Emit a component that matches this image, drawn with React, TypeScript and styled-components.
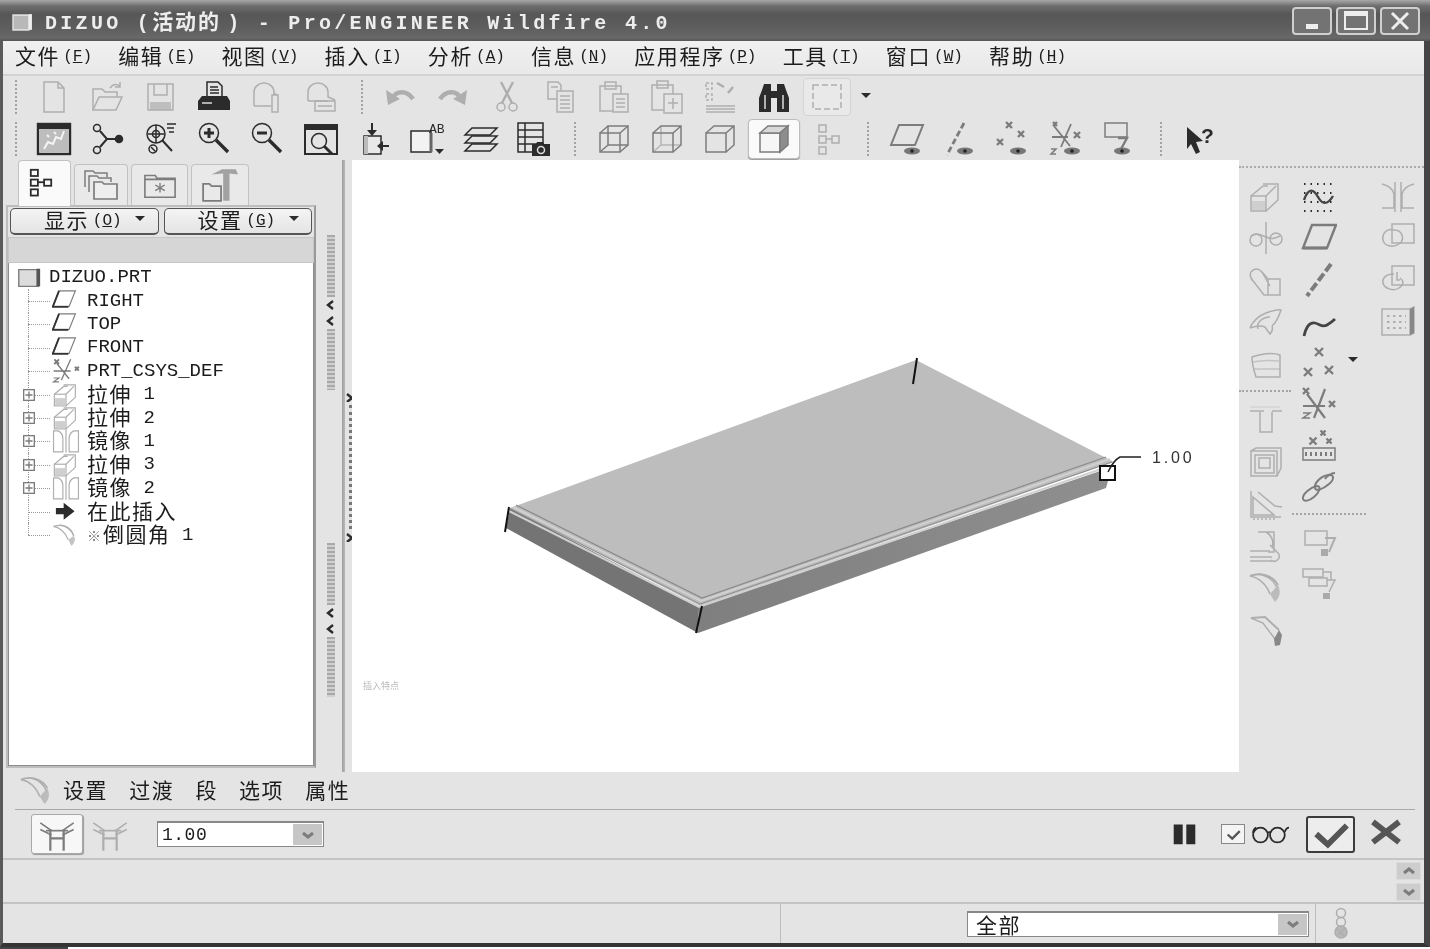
import React from "react";
import styled, { createGlobalStyle } from "styled-components";

const mono = `"Liberation Mono", "Noto Sans CJK SC", monospace`;
const cjk = `"Noto Sans CJK SC", "Liberation Sans", sans-serif`;
const faceBg = "#e4e4e4";

const Global = createGlobalStyle`
  html, body { margin: 0; padding: 0; background: #fff; }
  * { box-sizing: border-box; }
`;

type Tone = "dim" | "mid" | "dark";
const toneColor: Record<Tone, string> = { dim: "#aeaeae", mid: "#7c7c7c", dark: "#2b2b2b" };

const Glyph = styled.svg<{ $tone: Tone }>`
  display: block;
  flex: none;
  fill: none;
  stroke: ${(p) => toneColor[p.$tone]};
  color: ${(p) => toneColor[p.$tone]};
  stroke-width: 1.5;
`;

const Fill = (p: React.SVGProps<SVGPathElement>) => <path fill="currentColor" stroke="none" {...p} />;
const eye = (
  <>
    <ellipse cx="23" cy="30" rx="8" ry="3.4" fill="#777" stroke="none" />
    <circle cx="23" cy="30" r="1.8" fill="#222" stroke="none" />
  </>
);
const eyeLeft = (
  <>
    <ellipse cx="20" cy="30" rx="8" ry="3.4" fill="#777" stroke="none" />
    <circle cx="20" cy="30" r="1.8" fill="#222" stroke="none" />
  </>
);
const xMark = (x: number, y: number, r = 3) => (
  <path strokeWidth="2.4" d={`M${x - r} ${y - r}l${r * 2} ${r * 2}M${x + r} ${y - r}l${-r * 2} ${r * 2}`} />
);

const icons: Record<string, React.ReactNode> = {
  new: (<><path d="M8 3h14l6 6v24H8z" /><path d="M22 3v6h6" /></>),
  open: (<><path d="M4 31V10h9l3 3h12v5" /><path d="M4 31l6-13h23l-6 13z" /><path d="M21 9c3-4 7-4 10-2M31 3v5h-5" /></>),
  save: (<><rect x="6" y="5" width="25" height="26" /><path d="M12 5v11h13V5" /><Fill d="M8 23h21v8H8z" opacity=".7" /></>),
  print: (<><path d="M11 3h11l4 4v11H11z" /><path d="M14 8h8M14 11h9M14 14h9" /><Fill d="M6 17h25l3 5v9H2v-9z" /><path stroke="#ddd" d="M6 24h10" /></>),
  mail: (<><path d="M5 27V13a10 9 0 0 1 20 0v3" /><path d="M5 27h17" /><rect x="23" y="16" width="6" height="17" /><path d="M25 14l3 2" /></>),
  mail2: (<><path d="M5 22V13a10 9 0 0 1 20 0v5l7 3" /><path d="M5 22h20" /><rect x="12" y="22" width="20" height="10" /><path d="M15 27h14" /></>),
  undo: (<><path strokeWidth="4.5" d="M10 20c4-9 15-9 21 0" /><Fill d="M4 11l2 15 12-6z" /></>),
  redo: (<><path strokeWidth="4.5" d="M26 20c-4-9-15-9-21 0" /><Fill d="M32 11l-2 15-12-6z" /></>),
  cut: (<><circle cx="12" cy="28" r="4" /><circle cx="24" cy="28" r="4" /><path strokeWidth="2.4" d="M13 24L24 3M23 24L12 3" /></>),
  copy: (<><path d="M6 3h10l3 3v14H6z" /><rect x="15" y="12" width="16" height="21" fill="#e4e4e4" /><path d="M9 8h7M18 17h10M18 21h10M18 25h10M18 29h10" /></>),
  paste: (<><rect x="4" y="7" width="21" height="25" /><rect x="9" y="3" width="11" height="7" /><rect x="17" y="15" width="15" height="18" fill="#e4e4e4" /><path d="M20 20h9M20 24h9M20 28h9" /></>),
  pasteSp: (<><rect x="3" y="6" width="21" height="25" /><rect x="8" y="2" width="11" height="7" /><rect x="15" y="15" width="18" height="19" fill="#e4e4e4" /><path d="M24 19v11M19 24h10" /></>),
  regen: (<><path strokeDasharray="3 2" d="M4 4h6v6H4zM4 15h6v6H4z" /><path d="M15 4l7 4M31 8l-5 6" strokeWidth="2.5" /><path d="M4 27h29M4 30h29M4 33h29" /></>),
  binoc: (<><Fill d="M6 11l2-6h7v7h6V5h7l2 6 3 8v14H21V19h-6v14H3V19z" /><path stroke="#ddd" d="M9 16v14M27 16v14M17 11h2" /></>),
  marquee: (<rect x="4" y="6" width="28" height="24" strokeDasharray="6 3" />),
  repaint: (<><rect x="2" y="3" width="32" height="30" strokeWidth="2.4" /><Fill d="M2 3h32v5H2z" /><path fill="#bdbdbd" stroke="none" d="M4 8h28v23H4z" /><path stroke="#f4f4f4" strokeWidth="2" d="M8 28l4-7 5 2 3-7 5 2 3-8M11 14l2 2M18 11l2 2" /></>),
  spin: (<><circle cx="8" cy="7" r="3.5" /><circle cx="8" cy="29" r="3.5" /><circle cx="30" cy="18" r="3.5" fill="currentColor" /><path strokeWidth="2" d="M11 10l7 8-7 8M18 18h9" /></>),
  orient: (<><circle cx="14" cy="13" r="9" /><circle cx="14" cy="13" r="3.5" /><path d="M6 13h16M14 4v18" /><path strokeWidth="2" d="M20 19l10 11" /><path d="M25 3h9M25 7h7M27 11h5" /><circle cx="11" cy="28" r="4" /><path d="M9 26l5 5" /></>),
  zoomIn: (<><circle cx="13" cy="12" r="9.5" /><path strokeWidth="3" d="M8 12h10M13 7v10" /><path strokeWidth="3.4" d="M20 19l12 12" /></>),
  zoomOut: (<><circle cx="13" cy="12" r="9.5" /><path strokeWidth="3" d="M8 12h10" /><path strokeWidth="3.4" d="M20 19l12 12" /></>),
  refit: (<><rect x="2" y="4" width="32" height="29" strokeWidth="2" /><Fill d="M2 4h32v5H2z" /><circle cx="16" cy="20" r="7.5" /><path strokeWidth="3" d="M21 25l8 8" /></>),
  reorder: (<><path fill="#e8e8e8" d="M8 15h17v18H8z" /><path fill="#bbb" stroke="none" d="M8 15h4v18H8z" /><path strokeWidth="2" d="M16 2v9M33 25H24" /><Fill d="M11 9h10l-5 6zM27 20v10l-6-5z" /></>),
  named: (<><path fill="#f2f2f2" d="M2 10h20v21H2z" /><path stroke="#666" strokeWidth="3" d="M22 12v19" /><text x="20" y="12" fontFamily="Liberation Mono" fontSize="13" fill="currentColor" stroke="none">AB</text><Fill d="M26 28h9l-4.500 5z" /></>),
  layers: (<><path d="M9 7h25l-7 7H2z" /><path d="M9 15h25l-7 7H2z" /><path d="M9 23h25l-7 7H2z" /></>),
  viewMgr: (<><rect x="2" y="2" width="25" height="29" /><path d="M2 9h25M2 16h25M2 23h25M9 2v29" /><Fill d="M16 23h4l1-2h6l1 2h6v12H16z" /><circle cx="25" cy="29" r="3.500" stroke="#ddd" /></>),
  cubeWire: (<><rect x="4" y="12" width="20" height="19" /><rect x="12" y="5" width="20" height="19" /><path d="M4 12l8-7M24 12l8-7M24 31l8-7M4 31l8-7" /></>),
  cubeHid: (<><rect x="4" y="12" width="20" height="19" /><path d="M4 12l8-7h20v19l-8 7M24 12l8-7" /><path opacity=".45" d="M12 5v19h20M12 24l-8 7" /></>),
  cubeNo: (<><rect x="4" y="12" width="20" height="19" /><path d="M4 12l8-7h20v19l-8 7M24 12l8-7" /></>),
  cubeShade: (<><path fill="#f6f6f6" d="M4 12h20v19H4z" /><path fill="#d8d8d8" d="M4 12l8-7h20l-8 7z" /><path fill="#8d8d8d" d="M24 12l8-7v19l-8 7z" /></>),
  treeSm: (<><rect x="10" y="4" width="7" height="7" /><rect x="10" y="15" width="7" height="7" /><rect x="10" y="26" width="7" height="7" /><rect x="23" y="15" width="7" height="7" /><path d="M17 18h6" /></>),
  planeEye: (<><path strokeWidth="2" d="M10 4h24l-8 20H2z" />{eye}</>),
  axisEye: (<><path strokeWidth="2.8" strokeDasharray="6 3" d="M22 2L5 34" />{eye}</>),
  ptEye: (<>{xMark(14, 4)}{xMark(5, 21)}{xMark(26, 13)}{eye}</>),
  csEye: (<>{xMark(6, 3, 2)}<path strokeWidth="1.8" d="M3 16h16M22 3L12 26M5 5l16 20" />{xMark(28, 14)}<path d="M2 28h5l-5 5h5" />{eye}</>),
  noteEye: (<><rect x="3" y="2" width="22" height="14" /><path strokeWidth="2.4" d="M16 17h9l-6 11" />{eyeLeft}</>),
  help: (<><Fill d="M5 6l16 14-7 1 4 10-4 2-5-10-4 5z" /><text x="19" y="22" fontFamily="Liberation Sans" fontWeight="700" fontSize="21" fill="currentColor" stroke="none">?</text></>),
  extrude: (<><rect x="3" y="17" width="15" height="15" /><path d="M3 17l12-10h5M18 17l10-10M18 32l12-11V5H15" /><path fill="#cfcfcf" stroke="none" d="M4 22h13v9H4z" /></>),
  sketch: (<><path strokeDasharray="1.500 5" strokeWidth="2" d="M3 5h30M3 14h30M3 23h30M3 32h30" /><path strokeWidth="2.400" stroke="#444" d="M3 21c5-14 10-10 14-3s9 9 15-1" /></>),
  mirror: (<><path d="M15 3v30M21 3v30M2 5c8 2 11 5 12 10v14H2M34 5c-8 2-11 5-12 10v14h12" /></>),
  mirrorT: (<><path d="M2 5h6c4 2 6 5 6 10v17H2zM34 5h-6c-4 2-6 5-6 10v17h12zM18 3v30" /></>),
  revolve: (<><path d="M18 2v32" /><circle cx="8" cy="20" r="6" /><circle cx="28" cy="19" r="6" /><path d="M3 16c4-3 8-2 15 1s9 1 14-1" /></>),
  planeB: (<><path strokeWidth="2.400" d="M11 5h24l-9 23H2z" /><path strokeWidth="3" d="M2 28h24" /></>),
  merge: (<><rect x="12" y="4" width="22" height="19" /><path d="M14 10C6 8 2 14 3 20s10 8 16 4 4-14-5-14" /></>),
  merge2: (<><rect x="12" y="4" width="22" height="19" /><path d="M14 12C6 12 2 16 3 21s10 9 16 5 4-8 1-10" /><path d="M17 10v8h3" /></>),
  varSweep: (<><path d="M3 10c4-5 8-3 11 0l6 7h12v16H16L6 20c-3-3-5-6-3-10z" /><path d="M14 10l8 14M20 17v16" /></>),
  grid: (<><rect x="2" y="6" width="28" height="26" /><path d="M30 6l4-2v26l-4 2" /><path fill="#888" stroke="none" d="M30 6l4-2v26l-4 2z" /><path strokeWidth="2" strokeDasharray="2.500 3.500" d="M7 13h19M7 19h19M7 25h19" /></>),
  axisB: (<path strokeWidth="4" strokeDasharray="9 3" d="M30 2L6 34" />),
  blend: (<><path d="M2 25c3-7 8-12 16-15s12-4 15-3c-2 6-4 12-9 16M2 25c6-2 10-3 15-1l5 7c2-2 3-5 2-8" /><path d="M10 26c-2-6 4-12 12-12" /></>),
  curve: (<path strokeWidth="2.800" stroke="#444" d="M3 33c2-9 6-14 11-13s7 5 12 2 6-4 8-6" />),
  boundary: (<><path d="M4 12c8-3 20-5 28-2v22H8c-2-6-4-12-4-20z" /><path d="M5 24H32M4 17c10-2 18-2 27-1" opacity=".6" /></>),
  points: (<>{xMark(18, 7, 4)}{xMark(7, 27, 4)}{xMark(28, 25, 4)}</>),
  hole: (<><path d="M2 9h14M24 9h10M12 10v20h12V10" /><path d="M2 5h30" opacity=".3" /></>),
  csysB: (<>{xMark(5, 5, 3)}<path strokeWidth="2.200" d="M2 20h22M24 3L13 32M6 8l18 24" />{xMark(31, 18, 3)}<path d="M2 27h7l-7 5h7" /></>),
  shell: (<><rect x="3" y="7" width="26" height="25" /><rect x="7" y="11" width="19" height="18" /><rect x="11" y="14" width="11" height="10" /><path d="M3 7l5-3h25v20l-4 8" /></>),
  analysis: (<>{xMark(12, 13, 3.500)}{xMark(22, 5, 2.500)}{xMark(28, 13, 2.500)}<rect x="2" y="20" width="32" height="12" /><path strokeDasharray="2 3" strokeWidth="4" d="M4 26h28" /></>),
  rib: (<><path d="M3 6v26h30" /><path d="M5 12l21 18H5zM10 7l17 14 7 1" /><path strokeDasharray="2 2" d="M5 34h24" /></>),
  chain: (<><path strokeWidth="2" d="M2 30c-1-5 8-12 14-13 5 0 2 7-3 11s-10 5-11 2z" /><path strokeWidth="2" d="M14 19c-1-5 6-12 13-13 6-1 7 4 1 9s-13 8-14 4z" /><path strokeWidth="2" d="M24 10c1-2 6-6 10-6" /></>),
  draft: (<><path d="M2 34h22M2 30h22M2 24h20M22 18l8 8c4 4-2 11-7 7" /><path d="M10 5h16v20h-6M18 5c6 3 8 10 6 15" /></>),
  note: (<><rect x="4" y="6" width="22" height="14" /><path strokeWidth="2" d="M24 13h10l-6 14" /><path fill="#aaa" stroke="none" d="M20 24h7v7h-7z" /></>),
  note2: (<><rect x="2" y="3" width="20" height="8" /><rect x="8" y="12" width="18" height="8" /><path d="M22 6h8v8M26 14h8l-6 12" /><path fill="#aaa" stroke="none" d="M22 27h7v6h-7z" /></>),
  round: (<><path strokeWidth="2" d="M2 8c10-4 22-1 28 9" /><path d="M2 8c10 2 16 8 20 18M10 6c10 2 16 6 20 16" /><path fill="#bbb" stroke="none" d="M22 26l8-9c3 7 2 12-3 17z" /></>),
  chamfer: (<><path strokeWidth="2" d="M3 8l14-1 14 13" /><path d="M3 8l12 5 12 16" /><path fill="#888" stroke="none" d="M26 29l5-9 3 5-2 10-5 1z" /></>),
  plus: (<><rect x="3" y="3" width="12" height="12" fill="#fff" /><path d="M5 9h8M9 5v8" /></>),
  part: (<><path fill="#dcdcdc" d="M3 5h21v18H3z" /><path fill="#555" stroke="none" d="M22 4h4v19h-4z" /></>),
  plane: (<><path d="M9 5h21l-8 20H1z" /><path stroke="#333" strokeWidth="2.400" d="M9 5L1 25.500h20" /></>),
  csys: (<>{xMark(6, 6, 3)}<path strokeWidth="1.700" d="M2 18h22M24 3L12 30M6 8l16 20" />{xMark(32, 15, 2.500)}<path d="M2 27h7l-7 5h7" /></>),
  insert: (<Fill d="M5 13h10V6l14 11-14 11v-7H5z" />),
  roundT: (<><path strokeWidth="1.600" d="M2 7c12-4 22 0 26 12" /><path d="M2 7c10 2 15 8 19 17M10 5c10 2 15 6 18 14" /><path fill="#c4c4c4" stroke="none" d="M21 24l7-5c3 5 1 9-3 13z" /></>),
  tabTree: (<><rect x="2" y="2" width="8" height="7" strokeWidth="2" /><rect x="2" y="13" width="8" height="7" strokeWidth="2" /><rect x="2" y="24" width="8" height="7" strokeWidth="2" /><rect x="17" y="13" width="8" height="7" strokeWidth="2" /><path strokeWidth="2" d="M10 16h7" /></>),
  tabFolders: (<><path d="M2 20V4h8l2 2h12v4" /><path d="M6 25V9h8l2 2h12v4" /><path fill="#eee" strokeWidth="1.700" d="M11 32V15h8l2 2h13v15z" /></>),
  tabStar: (<><path strokeWidth="1.700" d="M2 31V8h11l2 3h19v20zM2 12h32" /><path d="M18 16v10M13 18l10 6M23 18l-10 6" /></>),
  tabTools: (<><path strokeWidth="1.700" d="M2 33V17h6l2 2h9v14z" /><Fill d="M10 8l10-5h13l2 5-8-1v26h-6V7z" opacity=".65" /></>),
  gate: (<><path d="M3 8l10 7M3 14l10 5M33 8l-10 7M33 14l-10 5" /><path strokeWidth="2" d="M12 14v19M24 14v19M12 22h12" /><path d="M8 15h20" /></>),
  pause: (<Fill d="M3 6h10v22H3zM17 6h10v22H17z" />),
  glasses: (<><circle cx="9" cy="19" r="7" strokeWidth="1.700" /><circle cx="25" cy="19" r="7" strokeWidth="1.700" /><path strokeWidth="1.700" d="M16 17c1-1 2-1 3 0M32 16c1-3 2-4 4-4M2 17c0-3 1-4 3-5" /></>),
  ok: (<path strokeWidth="5.500" stroke="#555" d="M4 18l11 10L33 10" />),
  cancel: (<path strokeWidth="6" stroke="#555" d="M4 5l27 21M31 5L4 26" />),
  light: (<><circle cx="12" cy="6" r="4.500" /><circle cx="12" cy="15" r="4.500" /><circle cx="12" cy="25" r="6" fill="#b8b8b8" /><path d="M8 22l7 7M9 28l7-7" /></>),
  chevDown: (<path strokeWidth="3" d="M3 4l5 4 5-4" />),
  chevUp: (<path strokeWidth="3" d="M3 8l5-4 5 4" />),
  arrowDown: (<Fill d="M2 3h10L7 8z" />),
  sashLeft: (<path strokeWidth="2.400" d="M8 2L3 6l5 4" />),
  sashRight: (<path strokeWidth="2.400" d="M2 2l5 4-5 4" />),
  winBlock: (<><path fill="#b8b8b8" stroke="#ddd" d="M1 3h15v14H1z" /><path fill="#eee" stroke="none" d="M16 2h3v15h-3z" /></>),
};

const Icon = ({ name, tone = "dim", size = 36, box = 36, boxH }: { name: string; tone?: Tone; size?: number; box?: number; boxH?: number }) => (
  <Glyph $tone={tone} width={size} height={size * ((boxH ?? box) / box)} viewBox={`0 0 ${box} ${boxH ?? box}`}>
    {icons[name]}
  </Glyph>
);

/* ---------- window shell ---------- */
const Window = styled.div`
  width: 1430px;
  height: 949px;
  overflow: hidden;
  background: #fff;
  display: flex;
  flex-direction: column;
  filter: blur(0.45px);
  color: #1c1c1c;
`;
const TitleBar = styled.header`
  flex: 0 0 41px;
  display: flex;
  align-items: center;
  padding: 3px 10px 0 12px;
  background: linear-gradient(#a8a8a8 0, #6e6e6e 6px, #575757 14px, #5e5e5e 28px, #686868 38px, #565656 41px);
`;
const TitleText = styled.div`
  margin-left: 12px;
  font: 700 20px/1 ${mono};
  letter-spacing: 3.3px;
  color: #ededed;
  white-space: pre;
`;
const TitleCjk = styled.span`
  font: 700 21px/1 ${cjk};
  letter-spacing: 2px;
  margin-right: 6px;
`;
const WinButtons = styled.div`
  margin-left: auto;
  display: flex;
  gap: 4px;
  margin-top: -3px;
`;
const WinButton = styled.button`
  width: 40px;
  height: 28px;
  padding: 0;
  display: flex;
  align-items: center;
  justify-content: center;
  background: #737373;
  border: 2px solid #cfcfcf;
  border-radius: 4px;
`;
const MinMark = styled.span`
  display: block;
  width: 12px;
  height: 5px;
  background: #eee;
  margin-top: 11px;
`;
const MaxMark = styled.span`
  display: block;
  width: 24px;
  height: 19px;
  border: 2px solid #eee;
  border-top-width: 5px;
`;
const CloseMark = styled.svg`
  display: block;
  stroke: #eee;
  stroke-width: 3;
  fill: none;
`;
const Body = styled.div`
  flex: 0 0 906px;
  display: flex;
  flex-direction: column;
  background: ${faceBg};
  border-left: 3px solid #5a5a5a;
  border-right: 6px solid #444;
  border-bottom: 4px solid #343434;
`;
const BottomStrip = styled.div`
  flex: 1;
  width: 68px;
  background: #444;
`;

/* ---------- menu ---------- */
const MenuBar = styled.nav`
  flex: 0 0 35px;
  display: flex;
  align-items: center;
  padding: 0 0 4px 12px;
  gap: 25px;
  background: linear-gradient(#f0f0f0, #e9e9e9);
  border-bottom: 2px solid #d2d2d2;
`;
const MenuItem = styled.span`
  display: flex;
  align-items: center;
  white-space: nowrap;
`;
const Cjk = styled.span`
  font: 400 21px/1 ${cjk};
  letter-spacing: 1.6px;
`;
const Hot = styled.span`
  font: 400 16px/1 ${mono};
  margin: 3px 0 0 3px;
  width: 30px;
  & u { text-underline-offset: 1px; }
`;

/* ---------- toolbars ---------- */
const ToolRow = styled.div`
  flex: 0 0 42px;
  display: flex;
  align-items: center;
  padding-left: 12px;
`;
const ToolSep = styled.span<{ $before: number; $after: number }>`
  flex: none;
  width: 2px;
  height: 34px;
  margin: 0 ${(p) => p.$after}px 0 ${(p) => p.$before}px;
  border-left: 2px dotted #a2a2a2;
`;
const ToolSlot = styled.span`
  flex: 0 0 53.4px;
  height: 42px;
  display: flex;
  align-items: center;
  justify-content: center;
`;
const ToolActive = styled.span<{ $strong?: boolean }>`
  display: flex;
  align-items: center;
  justify-content: center;
  width: ${(p) => (p.$strong ? 52 : 48)}px;
  height: ${(p) => (p.$strong ? 40 : 38)}px;
  background: ${(p) => (p.$strong ? "#fafafa" : "#e9e9e9")};
  border: 1px solid ${(p) => (p.$strong ? "#bdbdbd" : "#d4d4d4")};
  border-radius: 4px;
  box-shadow: ${(p) => (p.$strong ? "0 1px 1px #999" : "none")};
`;
const DropMark = styled.span`
  display: flex;
  margin-left: 5px;
`;

/* ---------- main area ---------- */
const Main = styled.div`
  flex: 0 0 612px;
  display: flex;
  min-width: 0;
`;
const LeftPanel = styled.aside`
  flex: 0 0 314px;
  min-width: 0;
  display: flex;
  flex-direction: column;
  padding: 0 1px 4px 3px;
`;
const Tabs = styled.div`
  flex: 0 0 45px;
  display: flex;
  align-items: flex-end;
  padding-left: 12px;
  gap: 3px;
`;
const Tab = styled.div<{ $active?: boolean; $w: number }>`
  width: ${(p) => p.$w}px;
  height: ${(p) => (p.$active ? 46 : 41)}px;
  margin-bottom: ${(p) => (p.$active ? -1 : 0)}px;
  display: flex;
  align-items: center;
  justify-content: center;
  background: ${(p) => (p.$active ? "#fafafa" : "#e9e9e9")};
  border: 1px solid #c2c2c2;
  border-bottom: none;
  border-radius: 4px 4px 0 0;
  z-index: ${(p) => (p.$active ? 1 : 0)};
`;
const TreeFrame = styled.div`
  flex: 1;
  min-width: 0;
  display: flex;
  flex-direction: column;
  border: 2px solid #bdbdbd;
  border-right-color: #9a9a9a;
  padding-top: 1px;
`;
const ButtonRow = styled.div`
  flex: 0 0 27px;
  display: flex;
  gap: 5px;
  margin: 0 2px;
`;
const PanelButton = styled.button`
  flex: 1;
  min-width: 0;
  height: 27px;
  padding: 0 0 3px 33px;
  display: flex;
  align-items: center;
  gap: 11px;
  background: linear-gradient(#f4f4f4, #e4e4e4);
  border: 1px solid #555;
  border-bottom-width: 2px;
  border-radius: 5px;
  color: inherit;
`;
const BtnLabel = styled.span`
  display: flex;
  align-items: center;
`;
const TreeHead = styled.div`
  flex: 0 0 26px;
  margin-top: 2px;
  background: #d6d6d6;
  border: 1px solid #c6c6c6;
`;
const TreeBody = styled.div`
  flex: 1;
  background: #fff;
  padding-top: 3px;
  border: 1px solid #8c8c8c;
  border-top: none;
`;
const TreeRow = styled.div<{ $root?: boolean; $last?: boolean }>`
  position: relative;
  height: 23.4px;
  display: flex;
  align-items: center;
  padding-left: ${(p) => (p.$root ? 7 : 12)}px;
  &::before {
    content: ${(p) => (p.$root ? "none" : '""')};
    position: absolute;
    left: 19px;
    top: 0;
    height: ${(p) => (p.$last ? "50%" : "100%")};
    border-left: 1px dotted #999;
  }
  &::after {
    content: ${(p) => (p.$root ? "none" : '""')};
    position: absolute;
    left: 19px;
    width: 22px;
    top: 50%;
    border-top: 1px dotted #999;
  }
`;
const Expander = styled.span`
  flex: 0 0 16px;
  position: relative;
  z-index: 1;
  display: flex;
`;
const TreeIcon = styled.span<{ $root?: boolean }>`
  flex: 0 0 ${(p) => (p.$root ? 33 : 50)}px;
  position: relative;
  z-index: 1;
  height: 23px;
  padding-left: ${(p) => (p.$root ? 0 : 15)}px;
  display: flex;
  align-items: center;
`;
const TreeLabel = styled.span`
  font: 400 19px/1 ${mono};
  display: flex;
  align-items: center;
  white-space: pre;
`;
const TreeCjk = styled(Cjk)`
  letter-spacing: 1.5px;
  margin-bottom: 3px;
`;
const Tiny = styled.span`
  font: 400 14px/1 ${cjk};
  color: #777;
  margin-right: 2px;
`;

/* ---------- sash ---------- */
const Sash = styled.div`
  flex: 0 0 35px;
  min-width: 0;
  display: flex;
  padding-left: 8px;
`;
const GripColumn = styled.div`
  flex: 0 0 8px;
  display: flex;
  flex-direction: column;
  align-items: center;
  padding-top: 75px;
`;
const Grip = styled.span<{ $h: number; $mt?: number }>`
  flex: none;
  width: 8px;
  height: ${(p) => p.$h}px;
  margin-top: ${(p) => p.$mt ?? 0}px;
  background: repeating-linear-gradient(#a9a9a9 0 2px, #cfcfcf 2px 4px);
`;
const SashChevron = styled.span`
  flex: 0 0 16px;
  display: flex;
  align-items: center;
`;
const SashLine = styled.span`
  flex: none;
  width: 3px;
  margin-left: 5px;
  background: linear-gradient(90deg, #9e9e9e, #b9b9b9);
`;
const GripRight = styled.div`
  flex: 0 0 9px;
  display: flex;
  flex-direction: column;
  align-items: center;
  padding-top: 232px;
  gap: 3px;
`;
const ThinGrip = styled.span`
  width: 3px;
  height: 124px;
  border-left: 3px dotted #777;
`;
const SashEdge = styled.span`
  flex: none;
  width: 2px;
  background: #8e8e8e;
`;

/* ---------- canvas ---------- */
const Canvas = styled.main`
  flex: 0 0 887px;
  background: #fff;
`;
const Model = styled.svg`
  display: block;
`;

/* ---------- right rail ---------- */
const Rail = styled.aside`
  flex: 1;
  min-width: 0;
  display: flex;
  flex-direction: column;
  padding-top: 6px;
`;
const RailDots = styled.span`
  flex: none;
  height: 2px;
  border-top: 2px dotted #ababab;
`;
const RailColumns = styled.div`
  display: flex;
  padding-top: 8px;
`;
const RailColumn = styled.div<{ $spaced?: boolean }>`
  flex: 0 0 53px;
  min-width: 0;
  display: flex;
  flex-direction: column;
  margin-left: ${(p) => (p.$spaced ? 26 : 0)}px;
`;
const RailSlot = styled.span`
  position: relative;
  flex: 0 0 41.5px;
  display: flex;
  align-items: center;
  justify-content: center;
`;
const RailSep = styled.span<{ $w?: number; $before: number; $after: number }>`
  flex: none;
  height: 2px;
  width: ${(p) => p.$w ?? 52}px;
  margin: ${(p) => p.$before}px 0 ${(p) => p.$after}px 0;
  border-top: 2px dotted #a6a6a6;
`;
const SlotDrop = styled.span`
  position: absolute;
  right: -15px;
  top: 12px;
`;

/* ---------- dashboard ---------- */
const DashTabs = styled.div`
  flex: 0 0 38px;
  min-height: 0;
  margin: 0 9px 0 12px;
  padding-bottom: 3px;
  display: flex;
  align-items: center;
  gap: 21px;
  border-bottom: 1px solid #a9a9a9;
`;
const DashIcon = styled.span`
  margin: 0 -11px 0 4px;
`;
const DashLabel = styled(Cjk)``;
const Controls = styled.div`
  flex: 0 0 50px;
  display: flex;
  align-items: center;
  padding: 0 21px 0 28px;
  border-bottom: 2px solid #c4c4c4;
`;
const ToggleOn = styled.span`
  flex: 0 0 52px;
  height: 40px;
  display: flex;
  align-items: center;
  justify-content: center;
  background: #f7f7f7;
  border: 1px solid #a8a8a8;
  border-radius: 3px;
  box-shadow: 1px 1px 1px #999;
`;
const ToggleOff = styled.span`
  flex: 0 0 54px;
  display: flex;
  justify-content: center;
`;
const Select = styled.div<{ $w: number; $h: number; $ml?: number }>`
  flex: 0 0 ${(p) => p.$w}px;
  height: ${(p) => p.$h}px;
  margin-left: ${(p) => p.$ml ?? 0}px;
  display: flex;
  align-items: center;
  justify-content: space-between;
  padding: 0 1px 0 4px;
  background: #fff;
  border: 1px solid #888;
  border-top-width: 2px;
`;
const SelectText = styled.span`
  font: 400 18px/1 ${mono};
  letter-spacing: 0.5px;
`;
const SelectArrow = styled.span`
  flex: 0 0 29px;
  height: 21px;
  display: flex;
  align-items: center;
  justify-content: center;
  background: #c6c6c6;
`;
const ControlsRight = styled.div`
  margin-left: auto;
  display: flex;
  align-items: center;
`;
const CheckBox = styled.span`
  flex: 0 0 24px;
  height: 20px;
  margin-left: 23px;
  display: flex;
  align-items: center;
  justify-content: center;
  background: #f4f4f4;
  border: 1px solid #888;
`;
const IconSpace = styled.span<{ $ml: number }>`
  margin-left: ${(p) => p.$ml}px;
  display: flex;
`;
const OkButton = styled.span`
  flex: 0 0 49px;
  height: 37px;
  margin-left: 17px;
  display: flex;
  align-items: center;
  justify-content: center;
  background: #ededed;
  border: 2px solid #3c3c3c;
  border-radius: 3px;
`;
const Messages = styled.div`
  flex: 0 0 44px;
  display: flex;
  justify-content: flex-end;
  align-items: center;
  padding-right: 3px;
  border-bottom: 2px solid #c2c2c2;
`;
const Stepper = styled.div`
  display: flex;
  flex-direction: column;
  gap: 3px;
`;
const StepButton = styled.span`
  width: 25px;
  height: 18px;
  display: flex;
  align-items: center;
  justify-content: center;
  background: #cdcdcd;
  border: 1px solid #dcdcdc;
`;
const StatusBar = styled.footer`
  flex: 1;
  display: flex;
  align-items: stretch;
`;
const StatusLeft = styled.div`
  flex: 0 0 778px;
  border-right: 1px solid #bdbdbd;
`;
const StatusRight = styled.div`
  flex: 1;
  display: flex;
  align-items: center;
  padding-left: 186px;
`;
const StatusValue = styled(Cjk)`
  margin-left: 4px;
`;
const StatusSep = styled.span`
  align-self: stretch;
  margin-left: 6px;
  width: 0;
  border-left: 1px solid #bdbdbd;
`;
const LightSlot = styled.span`
  margin-left: 13px;
  display: flex;
`;

/* ---------- data ---------- */
const menus: [string, string][] = [
  ["文件", "F"], ["编辑", "E"], ["视图", "V"], ["插入", "I"], ["分析", "A"],
  ["信息", "N"], ["应用程序", "P"], ["工具", "T"], ["窗口", "W"], ["帮助", "H"],
];

const Tool = ({ name, tone = "dim" }: { name: string; tone?: Tone }) => (
  <ToolSlot><Icon name={name} tone={tone} /></ToolSlot>
);

const Chev = () => (
  <SashChevron><Icon name="sashLeft" tone="dark" size={12} box={12} /></SashChevron>
);

const rail1 = ["extrude", "revolve", "varSweep", "blend", "boundary"];
const rail1b = ["hole", "shell", "rib", "draft", "round", "chamfer"];

type Row = { icon?: string; cjk?: string; text?: string; root?: boolean; plus?: boolean; tone?: Tone; mark?: boolean; last?: boolean; num?: string };
const tree: Row[] = [
  { icon: "part", text: "DIZUO.PRT", root: true, tone: "mid" },
  { icon: "plane", text: "RIGHT", tone: "mid" },
  { icon: "plane", text: "TOP", tone: "mid" },
  { icon: "plane", text: "FRONT", tone: "mid" },
  { icon: "csys", text: "PRT_CSYS_DEF", tone: "mid" },
  { icon: "extrude", cjk: "拉伸", num: "1", plus: true },
  { icon: "extrude", cjk: "拉伸", num: "2", plus: true },
  { icon: "mirrorT", cjk: "镜像", num: "1", plus: true },
  { icon: "extrude", cjk: "拉伸", num: "3", plus: true },
  { icon: "mirrorT", cjk: "镜像", num: "2", plus: true },
  { icon: "insert", cjk: "在此插入", tone: "dark" },
  { icon: "roundT", cjk: "倒圆角", num: "1", mark: true, last: true },
];

export default function App() {
  return (
    <Window>
      <Global />
      <TitleBar>
        <Icon name="winBlock" size={21} box={20} />
        <TitleText>
          DIZUO (<TitleCjk>活动的</TitleCjk>) - Pro/ENGINEER Wildfire 4.0
        </TitleText>
        <WinButtons>
          <WinButton aria-label="minimize"><MinMark /></WinButton>
          <WinButton aria-label="maximize"><MaxMark /></WinButton>
          <WinButton aria-label="close">
            <CloseMark width="22" height="20" viewBox="0 0 22 20"><path d="M3 2l16 16M19 2L3 18" /></CloseMark>
          </WinButton>
        </WinButtons>
      </TitleBar>

      <Body>
        <MenuBar>
          {menus.map(([label, key]) => (
            <MenuItem key={label}>
              <Cjk>{label}</Cjk>
              <Hot>(<u>{key}</u>)</Hot>
            </MenuItem>
          ))}
        </MenuBar>

        <ToolRow>
          <ToolSep $before={0} $after={10} />
          <Tool name="new" />
          <Tool name="open" />
          <Tool name="save" />
          <Tool name="print" tone="dark" />
          <Tool name="mail" />
          <Tool name="mail2" />
          <ToolSep $before={14} $after={10} />
          <Tool name="undo" />
          <Tool name="redo" />
          <Tool name="cut" />
          <Tool name="copy" />
          <Tool name="paste" />
          <Tool name="pasteSp" />
          <Tool name="regen" />
          <Tool name="binoc" tone="dark" />
          <ToolSlot><ToolActive><Icon name="marquee" /></ToolActive></ToolSlot>
          <DropMark><Icon name="arrowDown" tone="dark" size={14} box={14} /></DropMark>
        </ToolRow>
        <ToolRow>
          <ToolSep $before={0} $after={10} />
          <Tool name="repaint" tone="dark" />
          <Tool name="spin" tone="dark" />
          <Tool name="orient" tone="dark" />
          <Tool name="zoomIn" tone="dark" />
          <Tool name="zoomOut" tone="dark" />
          <Tool name="refit" tone="dark" />
          <Tool name="reorder" tone="dark" />
          <Tool name="named" tone="dark" />
          <Tool name="layers" tone="dark" />
          <Tool name="viewMgr" tone="dark" />
          <ToolSep $before={13} $after={11} />
          <Tool name="cubeWire" tone="mid" />
          <Tool name="cubeHid" tone="mid" />
          <Tool name="cubeNo" tone="mid" />
          <ToolSlot><ToolActive $strong><Icon name="cubeShade" tone="mid" /></ToolActive></ToolSlot>
          <Tool name="treeSm" />
          <ToolSep $before={13} $after={11} />
          <Tool name="planeEye" tone="mid" />
          <Tool name="axisEye" tone="mid" />
          <Tool name="ptEye" tone="mid" />
          <Tool name="csEye" tone="mid" />
          <Tool name="noteEye" tone="mid" />
          <ToolSep $before={13} $after={11} />
          <Tool name="help" tone="dark" />
        </ToolRow>

        <Main>
          <LeftPanel>
            <Tabs>
              <Tab $active $w={53}><Icon name="tabTree" tone="dark" size={32} /></Tab>
              <Tab $w={54}><Icon name="tabFolders" tone="mid" size={36} /></Tab>
              <Tab $w={57}><Icon name="tabStar" tone="mid" size={34} /></Tab>
              <Tab $w={58}><Icon name="tabTools" tone="mid" size={38} /></Tab>
            </Tabs>
            <TreeFrame>
              <ButtonRow>
                <PanelButton>
                  <BtnLabel><Cjk>显示</Cjk><Hot>(<u>O</u>)</Hot></BtnLabel>
                  <Icon name="arrowDown" tone="dark" size={14} box={14} />
                </PanelButton>
                <PanelButton>
                  <BtnLabel><Cjk>设置</Cjk><Hot>(<u>G</u>)</Hot></BtnLabel>
                  <Icon name="arrowDown" tone="dark" size={14} box={14} />
                </PanelButton>
              </ButtonRow>
              <TreeHead />
              <TreeBody>
                {tree.map((r, i) => (
                  <TreeRow key={i} $root={r.root} $last={r.last}>
                    {!r.root && (
                      <Expander>{r.plus && <Icon name="plus" tone="mid" size={16} box={18} />}</Expander>
                    )}
                    <TreeIcon $root={r.root}>
                      <Icon name={r.icon!} tone={r.tone ?? "dim"} size={r.root ? 26 : 28} box={r.root ? 28 : 36} />
                    </TreeIcon>
                    <TreeLabel>
                      {r.mark && <Tiny>※</Tiny>}
                      {r.cjk && <TreeCjk>{r.cjk}</TreeCjk>}
                      {r.text}
                      {r.num && ` ${r.num}`}
                    </TreeLabel>
                  </TreeRow>
                ))}
              </TreeBody>
            </TreeFrame>
          </LeftPanel>

          <Sash>
            <GripColumn>
              <Grip $h={62} />
              <Chev />
              <Chev />
              <Grip $h={61} />
              <Grip $h={62} $mt={153} />
              <Chev />
              <Chev />
              <Grip $h={60} />
            </GripColumn>
            <SashLine />
            <GripRight>
              <Icon name="sashRight" tone="dark" size={10} box={10} />
              <ThinGrip />
              <Icon name="sashRight" tone="dark" size={10} box={10} />
            </GripRight>
            <SashEdge />
          </Sash>

          <Canvas>
            <Model width="887" height="612" viewBox="352 160 887 612">
              <defs>
                <linearGradient id="rightFace" x1="0" y1="0" x2="1" y2="0">
                  <stop offset="0" stopColor="#7f7f7f" />
                  <stop offset="1" stopColor="#8f8f8f" />
                </linearGradient>
              </defs>
              <path d="M510 508L916 360L1114 462L700 606Z" fill="#bdbdbd" />
              <path d="M506 528L510 508L699 607L698 633Z" fill="#747474" />
              <path d="M699 607L1112 467L1106 488L698 633Z" fill="url(#rightFace)" />
              <path d="M516 505L702 598L1106 457" fill="none" stroke="#8a8a8a" strokeWidth="1.200" />
              <path d="M513 507L701 601L1110 459" fill="none" stroke="#d0d0d0" strokeWidth="2" />
              <path d="M511 509L700 604L1112 462" fill="none" stroke="#8e8e8e" strokeWidth="1" />
              <path d="M509 511L699 607L1113 465" fill="none" stroke="#cfcfcf" strokeWidth="2" />
              <path d="M509 507l-4 25M917 358l-4 26M702 606l-6 27" stroke="#111" strokeWidth="2" fill="none" />
              <rect x="1100" y="466" width="15" height="14" fill="#fff" stroke="#111" strokeWidth="2" />
              <path d="M1108 472c3-6 6-12 12-15h21" fill="none" stroke="#222" strokeWidth="1.400" />
              <text x="1152" y="463" fontFamily="Liberation Sans" fontSize="16" letterSpacing="2.800" fill="#333">1.00</text>
              <text x="363" y="689" fontFamily="Noto Sans CJK SC" fontSize="9" fill="#bbb">插入特点</text>
            </Model>
          </Canvas>

          <Rail>
            <RailDots />
            <RailColumns>
              <RailColumn>
                {rail1.map((n) => <RailSlot key={n}><Icon name={n} /></RailSlot>)}
                <RailSep $before={6} $after={8} />
                {rail1b.map((n) => <RailSlot key={n}><Icon name={n} /></RailSlot>)}
              </RailColumn>
              <RailColumn>
                <RailSlot><Icon name="sketch" tone="dark" /></RailSlot>
                <RailSlot><Icon name="planeB" tone="mid" /></RailSlot>
                <RailSlot><Icon name="axisB" tone="mid" /></RailSlot>
                <RailSlot><Icon name="curve" tone="mid" /></RailSlot>
                <RailSlot>
                  <Icon name="points" tone="mid" />
                  <SlotDrop><Icon name="arrowDown" tone="dark" size={14} box={14} /></SlotDrop>
                </RailSlot>
                <RailSlot><Icon name="csysB" tone="mid" /></RailSlot>
                <RailSlot><Icon name="analysis" tone="mid" /></RailSlot>
                <RailSlot><Icon name="chain" tone="mid" /></RailSlot>
                <RailSep $w={74} $before={5} $after={7} />
                <RailSlot><Icon name="note" /></RailSlot>
                <RailSlot><Icon name="note2" /></RailSlot>
              </RailColumn>
              <RailColumn $spaced>
                <RailSlot><Icon name="mirror" /></RailSlot>
                <RailSlot><Icon name="merge" /></RailSlot>
                <RailSlot><Icon name="merge2" /></RailSlot>
                <RailSlot><Icon name="grid" /></RailSlot>
              </RailColumn>
            </RailColumns>
          </Rail>
        </Main>

        <DashTabs>
          <DashIcon><Icon name="round" size={34} /></DashIcon>
          <DashLabel>设置</DashLabel>
          <DashLabel>过渡</DashLabel>
          <DashLabel>段</DashLabel>
          <DashLabel>选项</DashLabel>
          <DashLabel>属性</DashLabel>
        </DashTabs>

        <Controls>
          <ToggleOn><Icon name="gate" tone="mid" size={40} /></ToggleOn>
          <ToggleOff><Icon name="gate" size={40} /></ToggleOff>
          <Select $w={167} $h={26} $ml={20}>
            <SelectText>1.00</SelectText>
            <SelectArrow><Icon name="chevDown" tone="mid" size={16} box={16} boxH={12} /></SelectArrow>
          </Select>
          <ControlsRight>
            <Icon name="pause" tone="dark" size={27} box={30} boxH={34} />
            <CheckBox><Icon name="ok" tone="mid" size={15} /></CheckBox>
            <IconSpace $ml={6}><Icon name="glasses" tone="dark" size={38} /></IconSpace>
            <OkButton><Icon name="ok" tone="mid" size={38} /></OkButton>
            <IconSpace $ml={14}><Icon name="cancel" tone="mid" size={34} box={35} /></IconSpace>
          </ControlsRight>
        </Controls>

        <Messages>
          <Stepper>
            <StepButton><Icon name="chevUp" tone="mid" size={16} box={16} boxH={12} /></StepButton>
            <StepButton><Icon name="chevDown" tone="mid" size={16} box={16} boxH={12} /></StepButton>
          </Stepper>
        </Messages>

        <StatusBar>
          <StatusLeft />
          <StatusRight>
            <Select $w={342} $h={26}>
              <StatusValue>全部</StatusValue>
              <SelectArrow><Icon name="chevDown" tone="mid" size={16} box={16} boxH={12} /></SelectArrow>
            </Select>
            <StatusSep />
            <LightSlot><Icon name="light" size={34} box={34} /></LightSlot>
          </StatusRight>
        </StatusBar>
      </Body>
      <BottomStrip />
    </Window>
  );
}
